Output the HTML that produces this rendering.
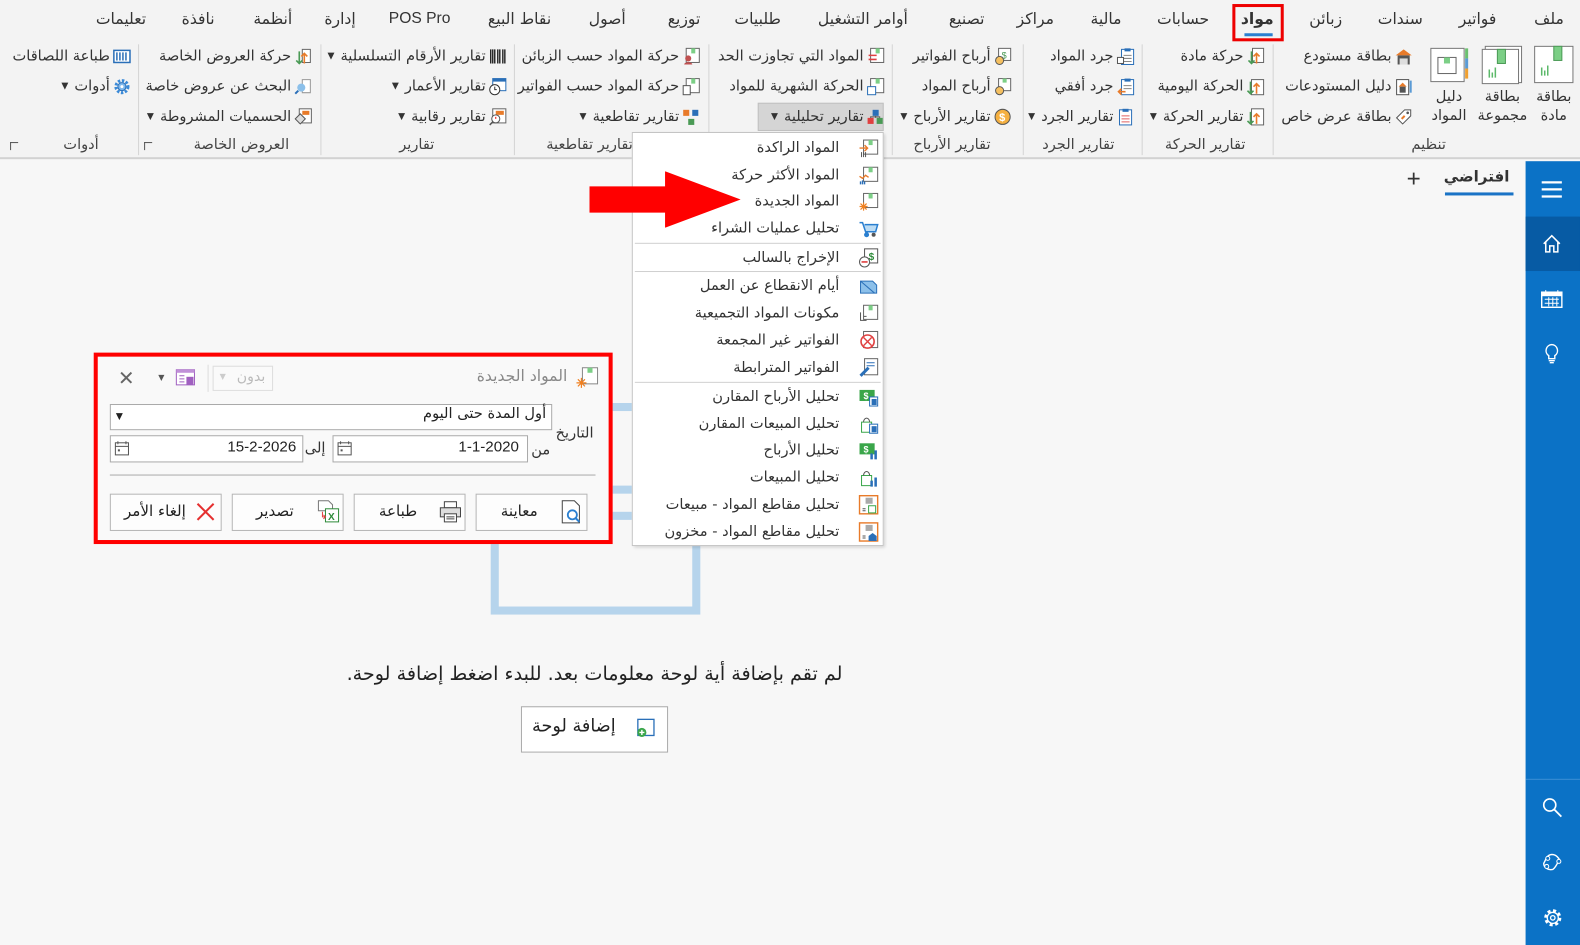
<!DOCTYPE html>
<html><head><meta charset="utf-8">
<style>
*{margin:0;padding:0;box-sizing:border-box}
html,body{width:1580px;height:945px;overflow:hidden;background:#f7f7f7}
body{font-family:"DejaVu Sans","Liberation Sans",sans-serif;color:#333}
#s{position:absolute;left:0;top:0;width:1568px;height:938px;transform-origin:0 0;transform:scale(1.00765,1.0075)}
.a{position:absolute;white-space:nowrap}
.t{position:absolute;white-space:nowrap;direction:rtl;font-size:14.5px;color:#333;line-height:18px}
.bl{position:absolute;direction:rtl;font-size:14.5px;color:#333;line-height:19px;text-align:center;top:87px}
.tab{position:absolute;white-space:nowrap;direction:rtl;font-size:15.5px;color:#333;top:9px;line-height:20px}
.it{position:absolute;display:flex;flex-direction:row-reverse;align-items:center;white-space:nowrap;font-size:14.5px;line-height:18px;direction:ltr}
.it span.x{direction:rtl}
.dd{font-size:9px;color:#333;margin-right:6px;margin-left:0}
.ic{display:inline-block;width:18px;height:18px;margin-left:3px;position:relative}
.gl{position:absolute;direction:rtl;font-size:14.5px;color:#444;top:136px;white-space:nowrap}
.sep{position:absolute;top:44px;width:1px;height:110px;background:#d4d4d4}
.mi{position:absolute;right:43px;direction:rtl;font-size:14.5px;color:#333;white-space:nowrap;line-height:18px}
.mic{position:absolute;right:4px;width:20px;height:20px}
.ms{position:absolute;left:2px;right:2px;height:1px;background:#d0d0d0}
.btn{position:absolute;top:136px;height:37px;width:111px;border:1px solid #b5b5b5;background:#fdfdfd}
</style></head><body>
<div id="s">
<!-- ribbon -->
<div class="a" style="left:0;top:0;width:1568px;height:158px;background:#f3f3f3;border-bottom:2px solid #d2d2d2"></div>

<div class="tab" style="right:16px">ملف</div>
<div class="tab" style="right:83px">فواتير</div>
<div class="tab" style="right:156px">سندات</div>
<div class="tab" style="right:236px">زبائن</div>
<div class="a" style="left:1223px;top:4px;width:51px;height:37px;border:3px solid #e00"></div>
<div class="tab" style="right:304px;font-weight:bold">مواد</div>
<div class="a" style="left:1235px;top:33px;width:28px;height:3px;background:#2a7fd0"></div>
<div class="tab" style="right:368px">حسابات</div>
<div class="tab" style="right:455px">مالية</div>
<div class="tab" style="right:522px">مراكز</div>
<div class="tab" style="right:591px">تصنيع</div>
<div class="tab" style="right:667px">أوامر التشغيل</div>
<div class="tab" style="right:793px">طلبيات</div>
<div class="tab" style="right:873px">توزيع</div>
<div class="tab" style="right:947px">أصول</div>
<div class="tab" style="right:1021px">نقاط البيع</div>
<div class="tab" style="right:1121px;font-family:'Liberation Sans',sans-serif">POS Pro</div>
<div class="tab" style="right:1215px">إدارة</div>
<div class="tab" style="right:1278px">أنظمة</div>
<div class="tab" style="right:1355px">نافذة</div>
<div class="tab" style="right:1423px">تعليمات</div>

<!-- big buttons -->
<svg class="a" style="left:1522px;top:45px" width="40" height="40"><rect x="1" y="1" width="38" height="36" fill="#fff" stroke="#777"/><rect x="20" y="1" width="8" height="14" fill="#7ccf86" stroke="#4a9a55"/><path d="M8 30v-8M11 30v-5M14 30v-10" stroke="#5cb96a" stroke-width="1.5"/></svg>
<div class="bl" style="left:1516px;width:52px">بطاقة<br>مادة</div>
<svg class="a" style="left:1470px;top:45px" width="42" height="40"><rect x="4" y="1" width="36" height="36" fill="#fff" stroke="#777"/><rect x="1" y="4" width="36" height="34" fill="#fff" stroke="#777"/><rect x="16" y="4" width="8" height="14" fill="#7ccf86" stroke="#4a9a55"/><path d="M8 32v-8M11 32v-5M14 32v-10" stroke="#5cb96a" stroke-width="1.5"/></svg>
<div class="bl" style="left:1461px;width:60px">بطاقة<br>مجموعة</div>
<svg class="a" style="left:1419px;top:45px" width="40" height="40"><rect x="1" y="3" width="33" height="33" fill="#fff" stroke="#777"/><rect x="8" y="12" width="18" height="16" fill="#fff" stroke="#666"/><rect x="14" y="12" width="6" height="6" fill="#7ccf86"/><rect x="35" y="3" width="3" height="10" fill="#6cc070"/><rect x="35" y="13" width="3" height="10" fill="#5b9bd5"/><rect x="35" y="23" width="3" height="10" fill="#f0a030"/></svg>
<div class="bl" style="left:1414px;width:48px">دليل<br>المواد</div>

<!-- تنظيم small -->
<div class="it" style="right:166px;top:47px"><svg class="ic" viewBox="0 0 18 18"><path d="M1 8L9 2l8 6z" fill="#e87b2a"/><rect x="3" y="8" width="12" height="9" fill="#555"/><rect x="5" y="11" width="8" height="6" fill="#ddd"/></svg><span class="x">بطاقة مستودع</span></div>
<div class="it" style="right:166px;top:77px"><svg class="ic" viewBox="0 0 18 18"><rect x="2" y="2" width="12" height="15" fill="#fff" stroke="#555"/><path d="M4 9l4-4 4 4z" fill="#e87b2a"/><rect x="5" y="9" width="6" height="6" fill="#555"/><rect x="15" y="3" width="2" height="12" fill="#5b9bd5"/></svg><span class="x">دليل المستودعات</span></div>
<div class="it" style="right:166px;top:107px"><svg class="ic" viewBox="0 0 18 18"><path d="M2 10l8-8h6v6l-8 8z" fill="#fff" stroke="#555"/><circle cx="13" cy="5" r="1.3" fill="#555"/><path d="M7 11l3-3" stroke="#e87b2a" stroke-width="2"/></svg><span class="x">بطاقة عرض خاص</span></div>
<div class="gl" style="right:133px">تنظيم</div>
<div class="sep" style="left:1263px"></div>

<!-- تقارير الحركة -->
<div class="it" style="right:313px;top:47px"><svg class="ic" viewBox="0 0 18 18"><rect x="6" y="1" width="11" height="14" fill="#fff" stroke="#666"/><path d="M5 4v12M2 13l3 3 3-3" stroke="#4a9a55" fill="none" stroke-width="1.6"/><path d="M10 16V6M7 9l3-3 3 3" stroke="#e87b2a" fill="none" stroke-width="1.6"/></svg><span class="x">حركة مادة</span></div>
<div class="it" style="right:313px;top:77px"><svg class="ic" viewBox="0 0 18 18"><rect x="5" y="2" width="12" height="15" fill="#fff" stroke="#666"/><path d="M4 4v12M1 13l3 3 3-3" stroke="#4a9a55" fill="none" stroke-width="1.6"/><path d="M10 16V6M7 9l3-3 3 3" stroke="#e87b2a" fill="none" stroke-width="1.6"/></svg><span class="x">الحركة اليومية</span></div>
<div class="it" style="right:313px;top:107px"><svg class="ic" viewBox="0 0 18 18"><rect x="5" y="1" width="12" height="16" fill="#fff" stroke="#666"/><path d="M4 4v12M1 13l3 3 3-3" stroke="#4a9a55" fill="none" stroke-width="1.6"/><path d="M10 16V6M7 9l3-3 3 3" stroke="#e87b2a" fill="none" stroke-width="1.6"/></svg><span class="x">تقارير الحركة</span><span class="dd">▼</span></div>
<div class="gl" style="right:332px">تقارير الحركة</div>
<div class="sep" style="left:1133px"></div>

<!-- تقارير الجرد -->
<div class="it" style="right:442px;top:47px"><svg class="ic" viewBox="0 0 18 18"><rect x="5" y="2" width="12" height="15" fill="#fff" stroke="#2a6fb8"/><rect x="8" y="1" width="6" height="3" fill="#2a6fb8"/><path d="M7 8h8M7 11h8M7 14h8" stroke="#888"/><rect x="1" y="10" width="6" height="6" fill="#fff" stroke="#555"/></svg><span class="x">جرد المواد</span></div>
<div class="it" style="right:442px;top:77px"><svg class="ic" viewBox="0 0 18 18"><rect x="5" y="2" width="12" height="15" fill="#fff" stroke="#2a6fb8"/><rect x="8" y="1" width="6" height="3" fill="#2a6fb8"/><path d="M7 8h8M7 11h8" stroke="#888"/><path d="M9 14H2M5 11l-3 3 3 3" stroke="#e87b2a" fill="none" stroke-width="1.6"/></svg><span class="x">جرد أفقي</span></div>
<div class="it" style="right:442px;top:107px"><svg class="ic" viewBox="0 0 18 18"><rect x="3" y="2" width="12" height="15" fill="#fff" stroke="#2a6fb8"/><rect x="6" y="1" width="6" height="3" fill="#2a6fb8"/><path d="M5 8h8M5 11h8M5 14h8" stroke="#e06060"/></svg><span class="x">تقارير الجرد</span><span class="dd">▼</span></div>
<div class="gl" style="right:462px">تقارير الجرد</div>
<div class="sep" style="left:1015px"></div>

<!-- تقارير الأرباح -->
<div class="it" style="right:564px;top:47px"><svg class="ic" viewBox="0 0 18 18"><rect x="5" y="1" width="12" height="12" fill="#fff" stroke="#666"/><text x="8" y="11" font-size="9" fill="#4a9a55" font-family="Liberation Sans">$</text><circle cx="6" cy="13" r="4" fill="#f5c060" stroke="#555"/></svg><span class="x">أرباح الفواتير</span></div>
<div class="it" style="right:564px;top:77px"><svg class="ic" viewBox="0 0 18 18"><rect x="5" y="1" width="12" height="12" fill="#fff" stroke="#666"/><rect x="9" y="1" width="4" height="4" fill="#7ccf86"/><circle cx="6" cy="13" r="4" fill="#f5c060" stroke="#555"/></svg><span class="x">أرباح المواد</span></div>
<div class="it" style="right:564px;top:107px"><svg class="ic" viewBox="0 0 18 18"><circle cx="9" cy="9" r="7.5" fill="#f5b040" stroke="#555"/><text x="5.5" y="13" font-size="11" fill="#fff" font-family="Liberation Sans" font-weight="bold">$</text></svg><span class="x">تقارير الأرباح</span><span class="dd">▼</span></div>
<div class="gl" style="right:585px">تقارير الأرباح</div>
<div class="sep" style="left:885px"></div>

<!-- تحليلية group -->
<div class="a" style="left:752px;top:102px;width:125px;height:28px;background:#d5d5d5;border:1px solid #c0c0c0"></div>
<div class="it" style="right:690px;top:47px"><svg class="ic" viewBox="0 0 18 18"><rect x="4" y="1" width="13" height="14" fill="#fff" stroke="#666"/><rect x="9" y="1" width="4" height="5" fill="#7ccf86"/><path d="M2 8h8M2 12h8" stroke="#e04040" stroke-width="1.5"/></svg><span class="x">المواد التي تجاوزت الحد</span></div>
<div class="it" style="right:690px;top:77px"><svg class="ic" viewBox="0 0 18 18"><rect x="4" y="1" width="13" height="14" fill="#fff" stroke="#666"/><rect x="9" y="1" width="4" height="5" fill="#7ccf86"/><rect x="1" y="9" width="8" height="8" fill="#fff" stroke="#2a6fb8"/></svg><span class="x">الحركة الشهرية للمواد</span></div>
<div class="it" style="right:690px;top:107px"><svg class="ic" viewBox="0 0 18 18"><rect x="1" y="10" width="6" height="6" fill="#e04040"/><rect x="10" y="10" width="6" height="6" fill="#4a9a55"/><rect x="6" y="2" width="6" height="6" fill="#2a6fb8"/><path d="M9 8v2M4 10V9h9v1" stroke="#555" fill="none"/></svg><span class="x">تقارير تحليلية</span><span class="dd">▼</span></div>
<div class="sep" style="left:703px"></div>

<!-- تقاطعية -->
<div class="it" style="right:873px;top:47px"><svg class="ic" viewBox="0 0 18 18"><rect x="4" y="1" width="13" height="14" fill="#fff" stroke="#666"/><rect x="9" y="1" width="4" height="5" fill="#7ccf86"/><circle cx="6" cy="11" r="3" fill="#c05050"/><path d="M2 17c0-3 8-3 8 0" fill="#c05050"/></svg><span class="x">حركة المواد حسب الزبائن</span></div>
<div class="it" style="right:873px;top:77px"><svg class="ic" viewBox="0 0 18 18"><rect x="4" y="1" width="13" height="14" fill="#fff" stroke="#666"/><rect x="9" y="1" width="4" height="5" fill="#7ccf86"/><rect x="1" y="8" width="7" height="9" fill="#fff" stroke="#555"/></svg><span class="x">حركة المواد حسب الفواتير</span></div>
<div class="it" style="right:873px;top:107px"><svg class="ic" viewBox="0 0 18 18"><rect x="1" y="2" width="6" height="6" fill="#e87b2a"/><rect x="10" y="2" width="6" height="6" fill="#2a6fb8"/><rect x="6" y="11" width="6" height="6" fill="#4a9a55"/></svg><span class="x">تقارير تقاطعية</span><span class="dd">▼</span></div>
<div class="gl" style="right:940px">تقارير تقاطعية</div>
<div class="sep" style="left:510px"></div>

<!-- تقارير -->
<div class="it" style="right:1065px;top:47px"><svg class="ic" viewBox="0 0 18 18"><path d="M2 2v14M4 2v14M6 2v14M9 2v14M11 2v14M14 2v14M16 2v14" stroke="#222" stroke-width="1.4"/></svg><span class="x">تقارير الأرقام التسلسلية</span><span class="dd">▼</span></div>
<div class="it" style="right:1065px;top:77px"><svg class="ic" viewBox="0 0 18 18"><rect x="4" y="1" width="13" height="12" fill="#fff" stroke="#2a6fb8"/><rect x="4" y="1" width="13" height="3" fill="#2a6fb8"/><circle cx="6" cy="12" r="5" fill="#fff" stroke="#333"/><path d="M6 9v3h2" stroke="#333" fill="none"/></svg><span class="x">تقارير الأعمار</span><span class="dd">▼</span></div>
<div class="it" style="right:1065px;top:107px"><svg class="ic" viewBox="0 0 18 18"><rect x="4" y="1" width="13" height="14" fill="#fff" stroke="#666"/><rect x="7" y="3" width="8" height="4" fill="#e87b2a"/><circle cx="7" cy="11" r="4" fill="#fff" stroke="#555"/><path d="M7 9v2" stroke="#e00"/><path d="M4 14l-3 3" stroke="#555" stroke-width="1.5"/></svg><span class="x">تقارير رقابية</span><span class="dd">▼</span></div>
<div class="gl" style="right:1137px">تقارير</div>
<div class="sep" style="left:318px"></div>

<!-- العروض الخاصة -->
<div class="it" style="right:1258px;top:47px"><svg class="ic" viewBox="0 0 18 18"><path d="M8 2h8v13H8z" fill="#fff" stroke="#666"/><path d="M5 4v12M2 13l3 3 3-3" stroke="#4a9a55" fill="none" stroke-width="1.6"/><path d="M10 16V6M7 9l3-3 3 3" stroke="#e87b2a" fill="none" stroke-width="1.6"/></svg><span class="x">حركة العروض الخاصة</span></div>
<div class="it" style="right:1258px;top:77px"><svg class="ic" viewBox="0 0 18 18"><path d="M8 2h8v13H8z" fill="#fff" stroke="#999"/><circle cx="7" cy="10" r="4" fill="#8cc0ea"/><path d="M4 13l-3 3" stroke="#2a6fb8" stroke-width="2"/></svg><span class="x">البحث عن عروض خاصة</span></div>
<div class="it" style="right:1258px;top:107px"><svg class="ic" viewBox="0 0 18 18"><rect x="5" y="1" width="12" height="14" fill="#fff" stroke="#666"/><rect x="8" y="3" width="7" height="4" fill="#e87b2a"/><path d="M1 11l5-5 5 5-5 5z" fill="#ddd" stroke="#555"/></svg><span class="x">الحسميات المشروطة</span><span class="dd">▼</span></div>
<div class="gl" style="right:1281px">العروض الخاصة</div>
<div class="a" style="left:143px;top:141px;width:8px;height:8px;border:1px solid #555;border-width:1px 0 0 1px"></div>
<div class="sep" style="left:137px"></div>

<!-- أدوات -->
<div class="it" style="right:1438px;top:47px"><svg class="ic" viewBox="0 0 18 18"><rect x="1" y="3" width="16" height="12" fill="#fff" stroke="#2a6fb8" stroke-width="1.5"/><path d="M4 5v8M7 5v8M10 5v8M13 5v8" stroke="#2a6fb8" stroke-width="1.5"/></svg><span class="x">طباعة اللصاقات</span></div>
<div class="it" style="right:1438px;top:77px"><svg class="ic" viewBox="0 0 18 18"><circle cx="9" cy="9" r="6" fill="none" stroke="#3a8ad8" stroke-width="3" stroke-dasharray="2.4 1.6"/><circle cx="9" cy="9" r="4" fill="#7fb8ec" stroke="#2a6fb8"/><circle cx="9" cy="9" r="1.5" fill="#fff"/></svg><span class="x">أدوات</span><span class="dd">▼</span></div>
<div class="gl" style="right:1470px">أدوات</div>
<div class="a" style="left:10px;top:141px;width:8px;height:8px;border:1px solid #555;border-width:1px 0 0 1px"></div>

<!-- content tab -->
<div class="a" style="right:70px;top:166px;direction:rtl;font-size:15px;font-weight:bold;color:#333">افتراضي</div>
<div class="a" style="left:1434px;top:191px;width:68px;height:3px;background:#1a73c6"></div>
<div class="a" style="left:1396px;top:164px;font-size:24px;font-family:'Liberation Sans';color:#333;line-height:28px">+</div>

<!-- sidebar -->
<div class="a" style="left:1514px;top:160px;width:54px;height:778px;background:#0b72c6"></div>
<div class="a" style="left:1514px;top:215px;width:54px;height:54px;background:#075ba4"></div>
<div class="a" style="left:1514px;top:773px;width:54px;height:1px;background:#3b8fd4"></div>
<svg class="a" style="left:1529px;top:178px" width="22" height="20"><path d="M1 3h20M1 10h20M1 17h20" stroke="#fff" stroke-width="2.2"/></svg>
<svg class="a" style="left:1530px;top:232px" width="20" height="20"><path d="M2 10L10 2l8 8M4 8v10h4v-6h4v6h4V8" stroke="#fff" stroke-width="1.5" fill="none"/></svg>
<svg class="a" style="left:1529px;top:287px" width="22" height="20"><rect x="1" y="3" width="20" height="15" fill="none" stroke="#fff" stroke-width="1.4"/><rect x="1" y="3" width="20" height="4" fill="#fff"/><path d="M5 1v4M17 1v4M4 10h14M4 14h14M8 8v9M12 8v9M16 8v9" stroke="#fff"/></svg>
<svg class="a" style="left:1532px;top:340px" width="16" height="22"><path d="M8 2a6 6 0 0 0-3 11v3h6v-3a6 6 0 0 0-3-11zM5 18h6M6 20h4" stroke="#fff" stroke-width="1.4" fill="none"/></svg>
<svg class="a" style="left:1530px;top:791px" width="22" height="22"><circle cx="8" cy="8" r="6" stroke="#fff" stroke-width="1.6" fill="none"/><path d="M12.5 12.5l7 7" stroke="#fff" stroke-width="1.8"/></svg>
<svg class="a" style="left:1530px;top:845px" width="22" height="22"><path d="M5 6c4-5 10-3 13 3-3 2-3 6-7 9-5 1-9-2-9-6z" stroke="#fff" stroke-width="1.4" fill="none"/><circle cx="6" cy="7" r="2" fill="#0b72c6" stroke="#fff"/><circle cx="17" cy="10" r="2" fill="#0b72c6" stroke="#fff"/><circle cx="5" cy="15" r="2" fill="#0b72c6" stroke="#fff"/></svg>
<svg class="a" style="left:1530px;top:900px" width="22" height="22"><circle cx="11" cy="11" r="7" fill="none" stroke="#fff" stroke-width="3" stroke-dasharray="3 2.5"/><circle cx="11" cy="11" r="5.5" fill="#0b72c6" stroke="#fff" stroke-width="1.3"/><circle cx="11" cy="11" r="2.2" fill="none" stroke="#fff" stroke-width="1.3"/></svg>

<!-- background graphic -->
<div class="a" style="left:487px;top:400px;width:208px;height:210px;border:8px solid #b6d4ec"></div>
<div class="a" style="left:590px;top:482px;width:110px;height:8px;background:#b6d4ec"></div>
<div class="a" style="left:590px;top:508px;width:110px;height:8px;background:#b6d4ec"></div>

<!-- empty message -->
<div class="a" style="left:290px;width:600px;top:658px;text-align:center;direction:rtl;font-size:19px;color:#222">لم تقم بإضافة أية لوحة معلومات بعد. للبدء اضغط إضافة لوحة.</div>
<div class="a" style="left:517px;top:701px;width:146px;height:46px;background:#fff;border:1px solid #aaa"></div>
<div class="a" style="left:528px;top:711px;direction:rtl;font-size:17.5px;color:#222">إضافة لوحة</div>
<svg class="a" style="left:631px;top:713px" width="20" height="20"><rect x="2" y="1" width="16" height="16" fill="#fff" stroke="#2a6fb8" stroke-width="1.3"/><circle cx="6" cy="14" r="4.5" fill="#3aa64a"/><path d="M6 11.5v5M3.5 14h5" stroke="#fff" stroke-width="1.4"/></svg>

<!-- dialog -->
<div class="a" style="left:93px;top:350px;width:515px;height:190px;border:4px solid #f00;background:#f9f9f9">
  <svg class="a" style="left:475px;top:10px" width="22" height="22"><rect x="6" y="1" width="15" height="16" fill="#fff" stroke="#888"/><rect x="11" y="1" width="5" height="5" fill="#7ccf86"/><path d="M5 11v10M0 16h10M1.5 12.5l7 7M8.5 12.5l-7 7" stroke="#f08020" stroke-width="1.2"/></svg>
  <div class="a" style="right:41px;top:10px;direction:rtl;font-size:15.5px;color:#888">المواد الجديدة</div>
  <div class="a" style="left:114px;top:9px;width:60px;height:25px;border:1px solid #ddd;background:#fafafa"></div>
  <div class="a" style="left:138px;top:12px;direction:rtl;font-size:14px;color:#bbb">بدون</div>
  <div class="a" style="left:121px;top:15px;font-size:8px;color:#ccc">▼</div>
  <div class="a" style="left:109px;top:8px;width:1px;height:27px;background:#ddd"></div>
  <svg class="a" style="left:76px;top:10px" width="22" height="22"><rect x="2" y="3" width="18" height="15" fill="#fff" stroke="#a060c0"/><rect x="2" y="3" width="18" height="3" fill="#c090d8"/><path d="M5 9h5M5 12h5M5 15h5" stroke="#a060c0"/><rect x="12" y="10" width="7" height="8" fill="#a060c0"/></svg>
  <div class="a" style="left:60px;top:16px;font-size:8px;color:#555">▼</div>
  <div class="a" style="left:20px;top:9px;font-size:20px;color:#666;font-family:'Liberation Sans'">✕</div>

  <div class="a" style="left:12px;top:47px;width:439px;height:26px;background:#fff;border:1px solid #aaa"></div>
  <div class="a" style="right:62px;top:49px;direction:rtl;font-size:14.5px;color:#222">أول المدة حتى اليوم</div>
  <div class="a" style="left:18px;top:55px;font-size:9px;color:#222">▼</div>
  <div class="a" style="right:15px;top:68px;direction:rtl;font-size:14.5px;color:#333">التاريخ</div>

  <div class="a" style="left:233px;top:78px;width:194px;height:27px;background:#fff;border:1px solid #aaa"></div>
  <div class="a" style="right:89px;top:81px;font-size:15px;color:#222;font-family:'Liberation Sans'">1-1-2020</div>
  <div class="a" style="right:58px;top:85px;direction:rtl;font-size:14.5px;color:#333">من</div>
  <div class="a" style="right:281px;top:83px;direction:rtl;font-size:14.5px;color:#333">إلى</div>
  <div class="a" style="left:12px;top:78px;width:192px;height:27px;background:#fff;border:1px solid #aaa"></div>
  <div class="a" style="right:310px;top:81px;font-size:15px;color:#222;font-family:'Liberation Sans'">15-2-2026</div>
  <svg class="a" style="left:237px;top:83px" width="16" height="16"><rect x="1.5" y="2.5" width="13" height="12" fill="#fff" stroke="#555"/><path d="M1.5 6h13M4 1v3M12 1v3" stroke="#555"/><rect x="4" y="9" width="2" height="2" fill="#555"/></svg>
  <svg class="a" style="left:16px;top:83px" width="16" height="16"><rect x="1.5" y="2.5" width="13" height="12" fill="#fff" stroke="#555"/><path d="M1.5 6h13M4 1v3M12 1v3" stroke="#555"/><rect x="4" y="9" width="2" height="2" fill="#555"/></svg>

  <div class="a" style="left:12px;top:117px;width:482px;height:1px;background:#aaa"></div>

  <div class="btn" style="left:375px"></div>
  <div class="a" style="left:400px;top:144px;direction:rtl;font-size:15px;color:#222">معاينة</div>
  <svg class="a" style="left:459px;top:142px" width="22" height="24"><path d="M2 1h12l5 5v17H2z" fill="#fff" stroke="#444"/><circle cx="12" cy="15" r="4.5" fill="none" stroke="#2a7fd0" stroke-width="1.8"/><path d="M15 18l4 4" stroke="#2a7fd0" stroke-width="2"/></svg>
  <div class="btn" style="left:254px"></div>
  <div class="a" style="left:279px;top:144px;direction:rtl;font-size:15px;color:#222">طباعة</div>
  <svg class="a" style="left:339px;top:143px" width="22" height="22"><rect x="5" y="1" width="12" height="6" fill="#fff" stroke="#444"/><rect x="1" y="7" width="20" height="9" fill="#ddd" stroke="#444"/><rect x="5" y="13" width="12" height="8" fill="#fff" stroke="#444"/><path d="M7 16h8M7 18h8" stroke="#444"/></svg>
  <div class="btn" style="left:133px"></div>
  <div class="a" style="left:157px;top:144px;direction:rtl;font-size:15px;color:#222">تصدير</div>
  <svg class="a" style="left:217px;top:142px" width="24" height="24"><path d="M2 1h10l4 4v6H2z" fill="#fff" stroke="#777"/><rect x="9" y="9" width="13" height="13" fill="#fff" stroke="#2e8b3a"/><text x="11.5" y="20" font-size="10" font-weight="bold" fill="#2e8b3a" font-family="Liberation Sans">X</text><path d="M6 12v5h3M7 15l2 2-2 2" stroke="#e04040" fill="none"/></svg>
  <div class="btn" style="left:12px"></div>
  <div class="a" style="left:26px;top:144px;direction:rtl;font-size:15px;color:#222">إلغاء الأمر</div>
  <svg class="a" style="left:97px;top:144px" width="20" height="20"><path d="M2 2l16 16M18 2L2 18" stroke="#e53030" stroke-width="2"/></svg>
</div>

<!-- dropdown menu -->
<div class="a" style="left:627px;top:131px;width:250px;height:411px;background:#fff;border:1px solid #c4c4c4;box-shadow:2px 2px 3px rgba(0,0,0,.15)">
  <div class="mi" style="top:6px">المواد الراكدة</div>
  <div class="mi" style="top:33px">المواد الأكثر حركة</div>
  <div class="mi" style="top:59px">المواد الجديدة</div>
  <div class="mi" style="top:86px">تحليل عمليات الشراء</div>
  <div class="ms" style="top:109px"></div>
  <div class="mi" style="top:115px">الإخراج بالسالب</div>
  <div class="ms" style="top:137px"></div>
  <div class="mi" style="top:143px">أيام الانقطاع عن العمل</div>
  <div class="mi" style="top:170px">مكونات المواد التجميعية</div>
  <div class="mi" style="top:197px">الفواتير غير المجمعة</div>
  <div class="mi" style="top:224px">الفواتير المترابطة</div>
  <div class="ms" style="top:247px"></div>
  <div class="mi" style="top:253px">تحليل الأرباح المقارن</div>
  <div class="mi" style="top:280px">تحليل المبيعات المقارن</div>
  <div class="mi" style="top:306px">تحليل الأرباح</div>
  <div class="mi" style="top:333px">تحليل المبيعات</div>
  <div class="mi" style="top:360px">تحليل مقاطع المواد - مبيعات</div>
  <div class="mi" style="top:387px">تحليل مقاطع المواد - مخزون</div>

  <svg class="mic" style="top:5px" viewBox="0 0 20 20"><rect x="5" y="2" width="14" height="14" fill="#fff" stroke="#666"/><rect x="10" y="2" width="4" height="5" fill="#7ccf86"/><path d="M1 10h8M6 7l3 3-3 3" stroke="#e87b2a" fill="none" stroke-width="1.4"/><path d="M3 14v5M5 14v5M7 14v5" stroke="#555"/></svg>
  <svg class="mic" style="top:32px" viewBox="0 0 20 20"><rect x="5" y="2" width="14" height="14" fill="#fff" stroke="#666"/><rect x="10" y="2" width="4" height="5" fill="#7ccf86"/><path d="M1 11l3 2 3-3 3 2" stroke="#e87b2a" fill="none" stroke-width="1.4"/><path d="M2 19v-3M4 19v-4M6 19v-3" stroke="#2a6fb8" stroke-width="1.4"/></svg>
  <svg class="mic" style="top:58px" viewBox="0 0 20 20"><rect x="5" y="2" width="14" height="14" fill="#fff" stroke="#666"/><rect x="10" y="2" width="4" height="5" fill="#7ccf86"/><path d="M5 11v8M1 15h8M2 12l6 6M8 12l-6 6" stroke="#f08020" stroke-width="1.2"/></svg>
  <svg class="mic" style="top:85px" viewBox="0 0 20 20"><path d="M1 4h3l3 9h10l2-7H6" stroke="#2a7fd0" stroke-width="1.5" fill="#bcdcf4"/><circle cx="8" cy="16" r="2.5" fill="#2a7fd0"/><circle cx="15" cy="16" r="2" fill="#555"/></svg>
  <svg class="mic" style="top:114px" viewBox="0 0 20 20"><rect x="6" y="1" width="13" height="14" fill="#fff" stroke="#555"/><text x="10" y="12" font-size="10" fill="#2e8b3a" font-family="Liberation Sans" font-weight="bold">$</text><circle cx="6" cy="14" r="5" fill="#fff" stroke="#555"/><path d="M3 14h6" stroke="#e04040" stroke-width="1.6"/></svg>
  <svg class="mic" style="top:142px" viewBox="0 0 20 20"><path d="M2 5h12l4 4v8H2z" fill="#8cc0ea" stroke="#2a6fb8"/><path d="M2 5l14 12" stroke="#2a6fb8"/></svg>
  <svg class="mic" style="top:169px" viewBox="0 0 20 20"><rect x="5" y="2" width="14" height="14" fill="#fff" stroke="#666"/><rect x="10" y="2" width="4" height="5" fill="#7ccf86"/><path d="M2 9v8h6M5 13h3" stroke="#555" fill="none"/></svg>
  <svg class="mic" style="top:196px" viewBox="0 0 20 20"><rect x="5" y="1" width="14" height="16" fill="#fff" stroke="#666"/><circle cx="9" cy="11" r="6.5" fill="#fff" stroke="#e04040" stroke-width="1.6"/><path d="M5 7l8 8M13 7l-8 8" stroke="#e04040" stroke-width="1.4"/></svg>
  <svg class="mic" style="top:223px" viewBox="0 0 20 20"><rect x="6" y="1" width="13" height="16" fill="#fff" stroke="#666"/><path d="M8 5h8M8 8h8" stroke="#2a6fb8"/><path d="M2 18l8-8" stroke="#2a6fb8" stroke-width="3"/></svg>
  <svg class="mic" style="top:252px" viewBox="0 0 20 20"><rect x="1" y="3" width="15" height="11" fill="#3aa64a"/><text x="5" y="12" font-size="9" fill="#fff" font-family="Liberation Sans" font-weight="bold">$</text><rect x="11" y="10" width="8" height="9" fill="#fff" stroke="#2a6fb8"/><rect x="13" y="12" width="5" height="6" fill="#2a6fb8"/></svg>
  <svg class="mic" style="top:279px" viewBox="0 0 20 20"><path d="M3 8h10v10H3z" fill="#fff" stroke="#3aa64a"/><path d="M5 8a3 4 0 0 1 6 0" stroke="#555" fill="none"/><rect x="11" y="10" width="8" height="9" fill="#fff" stroke="#2a6fb8"/><rect x="13" y="12" width="5" height="6" fill="#2a6fb8"/></svg>
  <svg class="mic" style="top:305px" viewBox="0 0 20 20"><rect x="1" y="3" width="15" height="11" fill="#3aa64a"/><text x="5" y="12" font-size="9" fill="#fff" font-family="Liberation Sans" font-weight="bold">$</text><path d="M13 19v-6M17 19v-9" stroke="#2a6fb8" stroke-width="2.5"/></svg>
  <svg class="mic" style="top:332px" viewBox="0 0 20 20"><path d="M3 8h10v10H3z" fill="#fff" stroke="#3aa64a"/><path d="M5 8a3 4 0 0 1 6 0" stroke="#555" fill="none"/><path d="M13 19v-6M17 19v-9" stroke="#2a6fb8" stroke-width="2.5"/></svg>
  <svg class="mic" style="top:359px" viewBox="0 0 20 20"><rect x="1" y="1" width="18" height="18" fill="#fff" stroke="#e87b2a" stroke-width="1.4"/><rect x="7" y="3" width="7" height="6" fill="#aaa"/><path d="M10 11h7v7h-7z" fill="#fff" stroke="#3aa64a"/><path d="M4 14h3M4 16h3" stroke="#555"/></svg>
  <svg class="mic" style="top:386px" viewBox="0 0 20 20"><rect x="1" y="1" width="18" height="18" fill="#fff" stroke="#e87b2a" stroke-width="1.4"/><rect x="7" y="3" width="7" height="6" fill="#aaa"/><path d="M10 14l4-3 4 3v5h-8z" fill="#2a6fb8"/><path d="M4 14h3M4 16h3" stroke="#555"/></svg>
</div>

<!-- arrow (on top of menu) -->
<svg class="a" style="left:585px;top:170px;z-index:10" width="152" height="56"><path d="M0 15h75V0l75 28-75 28V41H0z" fill="#f00"/></svg>
</div>
</body></html>
